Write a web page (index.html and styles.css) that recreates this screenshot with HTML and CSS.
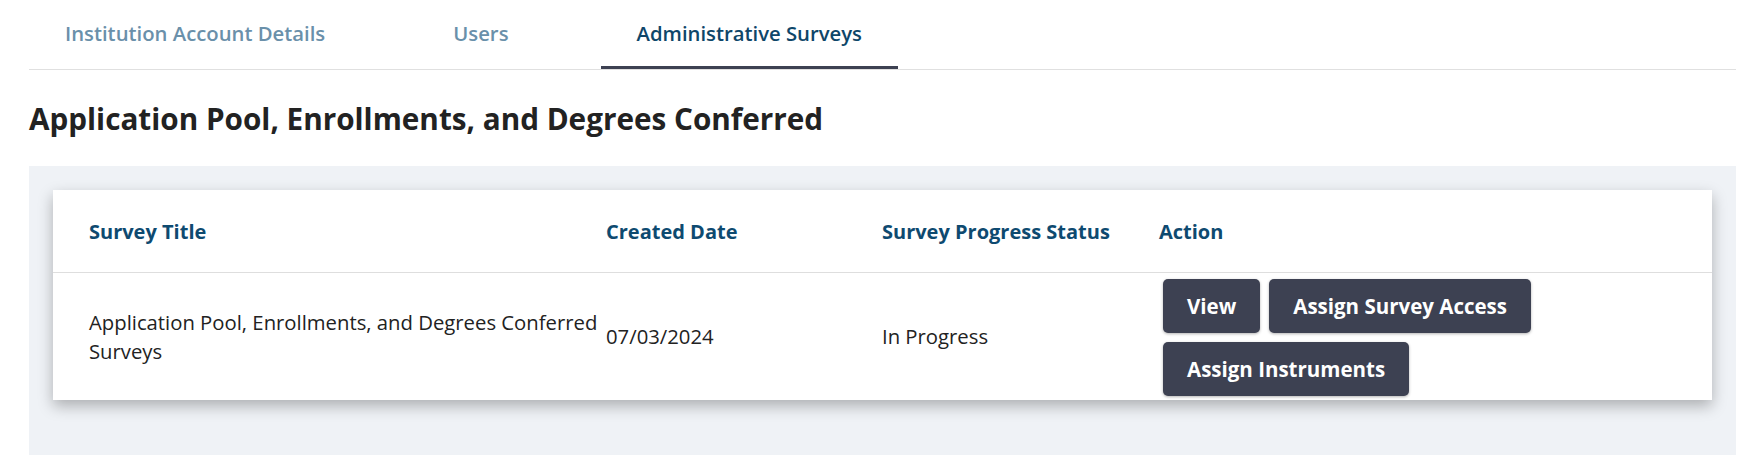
FILE: index.html
```html
<!DOCTYPE html>
<html lang="en">
<head>
<meta charset="utf-8">
<title>Administrative Surveys</title>
<link rel="stylesheet" href="styles.css">
</head>
<body>
<div class="page">
  <nav class="tabs">
    <a class="tab">Institution Account Details</a>
    <a class="tab">Users</a>
    <a class="tab active">Administrative Surveys</a>
  </nav>
  <h1 class="title">Application Pool, Enrollments, and Degrees Conferred</h1>
  <section class="panel">
    <div class="card">
      <div class="row head">
        <div class="cell">Survey Title</div>
        <div class="cell">Created Date</div>
        <div class="cell">Survey Progress Status</div>
        <div class="cell">Action</div>
      </div>
      <div class="row body">
        <div class="cell">Application Pool, Enrollments, and Degrees Conferred Surveys</div>
        <div class="cell">07/03/2024</div>
        <div class="cell">In Progress</div>
        <div class="cell actions">
          <button class="btn">View</button>
          <button class="btn">Assign Survey Access</button>
          <button class="btn">Assign Instruments</button>
        </div>
      </div>
    </div>
  </section>
</div>
</body>
</html>
```
FILE: styles.css
```css
* { box-sizing: border-box; }
html, body { margin: 0; padding: 0; background: #fff; }
body {
  font-family: "Open Sans", "Noto Sans", sans-serif;
  color: #222;
}
.page { padding: 0 26px 0 29px; }

.tabs {
  display: flex;
  border-bottom: 1px solid #e0e0e0;
  height: 70px;
}
.tab {
  display: flex;
  align-items: center;
  height: 69px;
  padding: 0 36px;
  margin-right: 56px;
  font-size: 20.3px;
  font-weight: 600;
  color: #6a90aa;
  border-bottom: 3px solid transparent;
}
.tab.active {
  color: #0e4669;
  border-bottom-color: #3d4152;
}

.title {
  margin: 33px 0 0;
  font-size: 29.7px;
  font-weight: 700;
  line-height: 32px;
  color: #222;
  height: 63px;
}

.panel {
  background: #eff2f6;
  padding: 24px 24px 55px;
}
.card {
  background: #fff;
  box-shadow: 0 6px 14px rgba(0, 0, 0, 0.28);
}
.row {
  display: grid;
  grid-template-columns: 517px 276px 277px 1fr;
  padding-left: 36px;
  align-items: center;
}
.row.head {
  height: 83px;
  border-bottom: 1px solid #dedede;
  font-size: 20px;
  font-weight: 700;
  color: #0e4a70;
}
.row.body {
  min-height: 127px;
  font-size: 20.3px;
  line-height: 29px;
  color: #222;
}
.actions {
  display: flex;
  flex-wrap: wrap;
  gap: 9px;
  padding: 6px 0 4px 4px;
  align-self: stretch;
  align-content: flex-start;
}
.btn {
  font-family: inherit;
  font-size: 20.5px;
  font-weight: 700;
  color: #fff;
  background: #3d4152;
  border: none;
  border-radius: 5px;
  height: 54px;
  padding: 0 24px;
  box-shadow: 0 1px 3px rgba(0, 0, 0, 0.3);
}
```
